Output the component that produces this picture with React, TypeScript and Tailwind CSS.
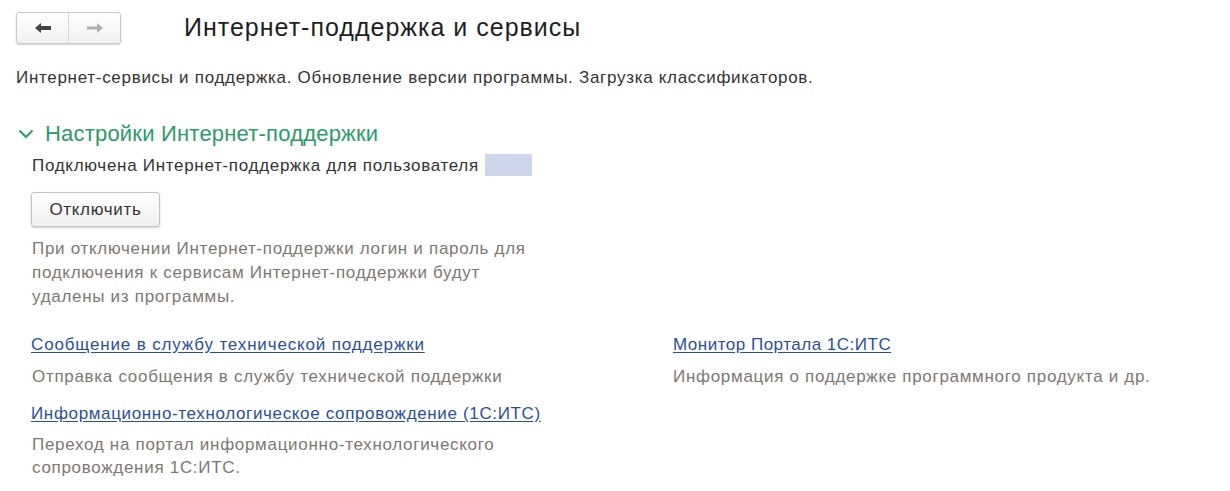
import React from "react";

export default function App() {
  return (
    <div
      className="w-[1230px] h-[491px] bg-white overflow-hidden text-[#3b3b3b]"
      style={{ fontFamily: '"Liberation Sans", Arial, sans-serif' }}
    >
      {/* header */}
      <div className="flex items-center pt-[11px] pl-[16px] h-[44px]">
        <div className="flex h-[32px] w-[105px] rounded-[3px] border border-[#c8c8c8] bg-gradient-to-b from-white to-[#f1f1f1] shadow-[0_1px_2px_rgba(0,0,0,0.18)]">
          <div className="flex-1 flex items-center justify-center border-r border-[#d6d6d6]">
            <svg width="18" height="12" viewBox="0 0 18 12">
              <path d="M1 6 L7 1 L7 4 L17 4 L17 8 L7 8 L7 11 Z" fill="#444" />
            </svg>
          </div>
          <div className="flex-1 flex items-center justify-center">
            <svg width="18" height="12" viewBox="0 0 18 12">
              <path d="M17 6 L11 1 L11 4.5 L1 4.5 L1 7.5 L11 7.5 L11 11 Z" fill="#b0b0b0" />
            </svg>
          </div>
        </div>
        <div className="ml-[63px] text-[25px] tracking-[1px] text-[#1e1e1e] leading-none">Интернет-поддержка и сервисы</div>
      </div>

      <div className="pl-[16px] mt-[24px] text-[17px] tracking-[0.7px] text-[#333] leading-[20px]">
        Интернет-сервисы и поддержка. Обновление версии программы. Загрузка классификаторов.
      </div>

      <div className="flex items-center pl-[18px] mt-[33px] h-[26px]">
        <svg width="16" height="10" viewBox="0 0 16 10">
          <path d="M1.5 1.5 L8 8 L14.5 1.5" fill="none" stroke="#2a9b6b" strokeWidth="2" />
        </svg>
        <span className="ml-[11px] text-[22px] tracking-[0.2px] text-[#2a9b6b] leading-none">Настройки Интернет-поддержки</span>
      </div>

      <div className="pl-[32px] text-[17px] tracking-[0.7px]">
        <div className="flex items-center mt-[6px] h-[24px]">
          <span className="text-[#333] leading-none">Подключена Интернет-поддержка для пользователя</span>
          <span className="ml-[6px] w-[47px] h-[22px] bg-[#cdd6ea]" />
        </div>

        <button className="mt-[15px] h-[35px] w-[129px] -ml-[1px] rounded-[3px] border border-[#c4c4c4] bg-gradient-to-b from-white to-[#efefef] shadow-[0_1px_2px_rgba(0,0,0,0.2)] text-[#333]">
          Отключить
        </button>

        <div className="mt-[10px] leading-[24px] text-[#7d7873]">
          <div>При отключении Интернет-поддержки логин и пароль для</div>
          <div>подключения к сервисам Интернет-поддержки будут</div>
          <div>удалены из программы.</div>
        </div>

        <div className="grid grid-cols-[641px_1fr] mt-[24px]">
          <div>
            <a className="block -ml-[1px] tracking-[0.85px] leading-[24px] text-[#2a4f9a] underline underline-offset-2">
              Сообщение в службу технической поддержки
            </a>
            <div className="mt-[8px] leading-[24px] text-[#7d7873]">
              Отправка сообщения в службу технической поддержки
            </div>
            <a className="block mt-[13px] -ml-[1px] tracking-[0.65px] leading-[24px] text-[#2a4f9a] underline underline-offset-2">
              Информационно-технологическое сопровождение (1С:ИТС)
            </a>
            <div className="mt-[7px] leading-[23px] text-[#7d7873]">
              <div>Переход на портал информационно-технологического</div>
              <div>сопровождения 1С:ИТС.</div>
            </div>
          </div>
          <div>
            <a className="block tracking-[0.5px] leading-[24px] text-[#2a4f9a] underline underline-offset-2">
              Монитор Портала 1С:ИТС
            </a>
            <div className="mt-[8px] leading-[24px] text-[#7d7873]">
              Информация о поддержке программного продукта и др.
            </div>
          </div>
        </div>
      </div>
    </div>
  );
}
